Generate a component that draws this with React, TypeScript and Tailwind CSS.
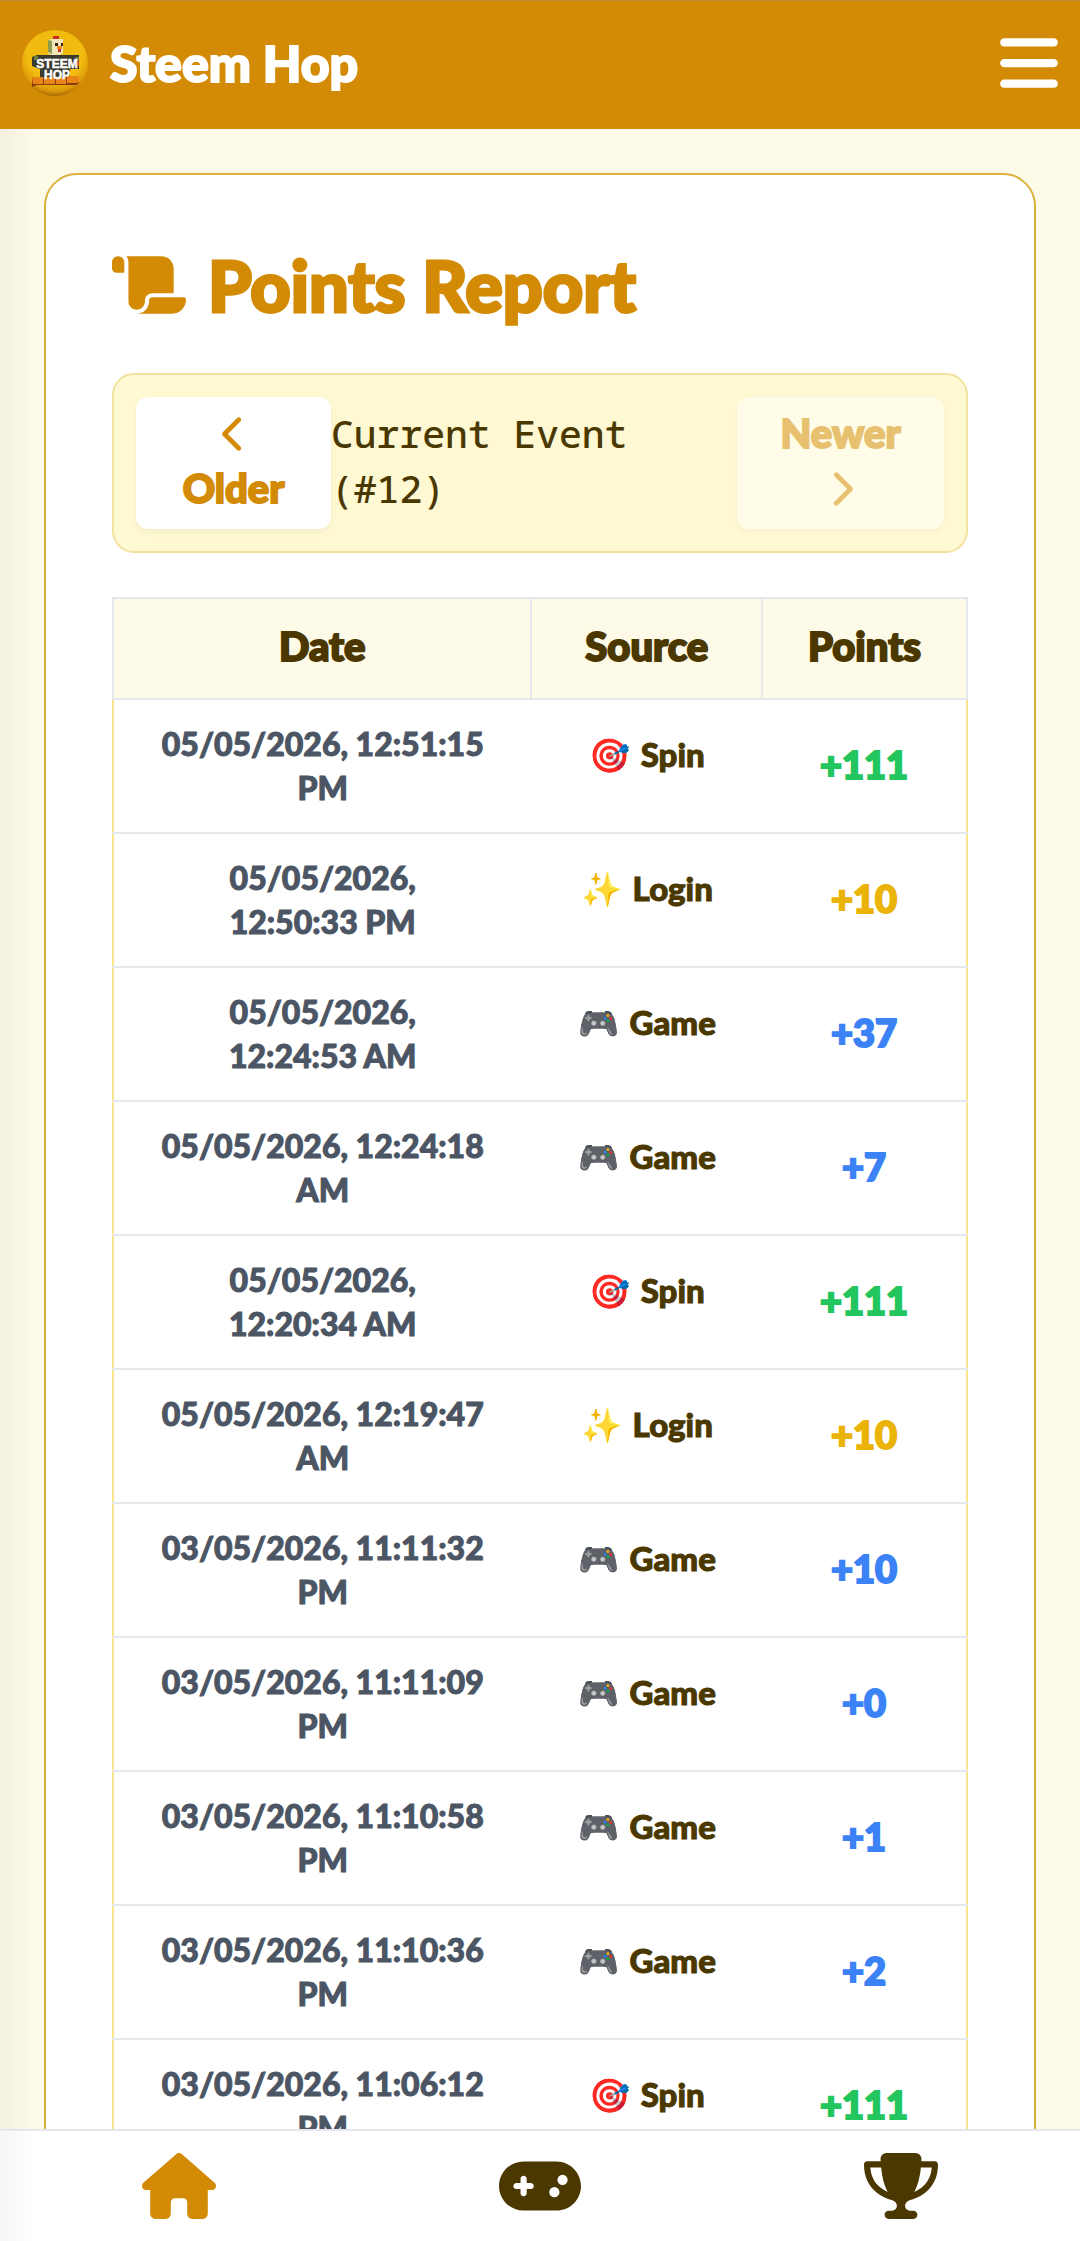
import clsx from "clsx";
import { useState } from "react";
import {
  FaBars,
  FaChevronLeft,
  FaChevronRight,
  FaGamepad,
  FaHouse,
  FaScroll,
  FaTrophy,
} from "react-icons/fa6";

type Source = "Spin" | "Login" | "Game";

interface PointEntry {
  date: [string, string];
  source: Source;
  points: number;
}

const sourceIcons: Record<Source, string> = {
  Spin: "🎯",
  Login: "✨",
  Game: "🎮",
};

const pointColors: Record<Source, string> = {
  Spin: "text-[#22c55e]",
  Login: "text-[#eab308]",
  Game: "text-[#3b82f6]",
};

const entries: PointEntry[] = [
  { date: ["05/05/2026, 12:51:15", "PM"], source: "Spin", points: 111 },
  { date: ["05/05/2026,", "12:50:33 PM"], source: "Login", points: 10 },
  { date: ["05/05/2026,", "12:24:53 AM"], source: "Game", points: 37 },
  { date: ["05/05/2026, 12:24:18", "AM"], source: "Game", points: 7 },
  { date: ["05/05/2026,", "12:20:34 AM"], source: "Spin", points: 111 },
  { date: ["05/05/2026, 12:19:47", "AM"], source: "Login", points: 10 },
  { date: ["03/05/2026, 11:11:32", "PM"], source: "Game", points: 10 },
  { date: ["03/05/2026, 11:11:09", "PM"], source: "Game", points: 0 },
  { date: ["03/05/2026, 11:10:58", "PM"], source: "Game", points: 1 },
  { date: ["03/05/2026, 11:10:36", "PM"], source: "Game", points: 2 },
  { date: ["03/05/2026, 11:06:12", "PM"], source: "Spin", points: 111 },
];

const tabs = [
  { id: "home", label: "Home", icon: FaHouse, width: "w-[74px]" },
  { id: "games", label: "Games", icon: FaGamepad, width: "w-[82px]" },
  { id: "leaderboard", label: "Leaderboard", icon: FaTrophy, width: "w-[74px]" },
];

const Logo: React.FC = () => (
  <svg viewBox="0 0 66 66" className="size-[66px] shrink-0" aria-hidden="true">
    <defs>
      <radialGradient id="ball" cx="0.5" cy="0.35" r="0.65">
        <stop offset="0" stopColor="#efb80c" />
        <stop offset="0.65" stopColor="#f2bd10" />
        <stop offset="0.88" stopColor="#dd9a08" />
        <stop offset="1" stopColor="#a96b06" />
      </radialGradient>
    </defs>
    <circle cx="33" cy="33" r="33" fill="url(#ball)" />
    <path d="M31 6h6v5h-6z" fill="#c9301c" />
    <path d="M26 10l4-1h11v14l-3 2H29l-3-2z" fill="#f3e6bd" />
    <path d="M26 10l4 1v13l-4-2z" fill="#8d9c4d" />
    <path d="M33 13h3v3h-3zM39 13h2v3h-2z" fill="#33240f" />
    <path d="M35 16h5v3h-5z" fill="#ec8a12" />
    <path d="M36 19h3v3h-3z" fill="#c9301c" />
    <path d="M10 27l5-2h42v14h-9v10H18V39l-8-3z" fill="#3c3b30" />
    <path d="M12 26h4v4h-4zM54 27h3v4h-3z" fill="#6e7b42" />
    <path d="M55 32h2v4h-2z" fill="#d8431f" />
    <path d="M10 47h47v6l-3 2H15l-5 2z" fill="#8a3d0b" />
    <path d="M10 47h11v7H11zM22 47h11v7H22zM34 47h10v7H34zM45 46h12v6l-2 1H45z" fill="#e98518" />
    <g
      fill="#fff"
      stroke="#fff"
      strokeWidth="0.5"
      fontFamily="'Liberation Sans', sans-serif"
      fontWeight="700"
      textAnchor="middle"
    >
      <text x="35" y="38" fontSize="12">
        STEEM
      </text>
      <text x="35" y="49" fontSize="12">
        HOP
      </text>
    </g>
  </svg>
);

const Header: React.FC = () => (
  <header className="flex shrink-0 items-center justify-between border-t border-[#b98a35] bg-[#d38a04] px-[22px] pt-[29px] pb-[33px] text-white">
    <a href="#home" className="flex items-center gap-[22px]">
      <Logo />
      <span className="text-[50px] leading-[66px] font-black [-webkit-text-stroke:2px]">
        Steem Hop
      </span>
    </a>
    <button type="button" aria-label="Open menu">
      <FaBars className="h-[66px] w-[58px]" />
    </button>
  </header>
);

const EventPager: React.FC = () => (
  <div className="mt-[44px] flex items-center justify-between rounded-[22px] border-2 border-[#f1e29f] bg-[#fef8d3] p-[22px] text-[38px] leading-[55px]">
    <button
      type="button"
      className="flex w-[195px] shrink-0 flex-col items-center rounded-xl bg-white pt-[9px] pb-[13px] text-[40px] font-black text-[#d38a04] shadow-[0_3px_6px_rgba(0,0,0,0.05)] [-webkit-text-stroke:2px]"
    >
      <span className="flex h-[55px] items-center">
        <FaChevronLeft className="size-[38px] stroke-none" />
      </span>
      Older
    </button>
    <span className="grow pb-1 font-['Noto_Sans_Mono','DejaVu_Sans_Mono',monospace] font-medium">
      Current Event
      <br />
      (#12)
    </span>
    <button
      type="button"
      disabled
      className="flex w-[207px] shrink-0 flex-col items-center rounded-xl bg-[#fffce8] pt-[9px] pb-[13px] text-[40px] font-black text-[#e7c170] shadow-[0_3px_6px_rgba(0,0,0,0.03)] [-webkit-text-stroke:2px]"
    >
      Newer
      <span className="flex h-[55px] items-center">
        <FaChevronRight className="size-[38px] stroke-none" />
      </span>
    </button>
  </div>
);

const PointsTable: React.FC = () => (
  <table className="mt-[44px] w-full table-fixed border-collapse border-2 border-[#f6e58d] text-center">
    <colgroup>
      <col className="w-[49%]" />
      <col className="w-[27%]" />
      <col className="w-[24%]" />
    </colgroup>
    <thead className="bg-[#fefae8] text-[40px] leading-[55px] [-webkit-text-stroke:2px]">
      <tr>
        {["Date", "Source", "Points"].map((title) => (
          <th key={title} className="border-2 border-gray-200 pt-5 pb-6 font-black">
            {title}
          </th>
        ))}
      </tr>
    </thead>
    <tbody>
      {entries.map(({ date, source, points }) => (
        <tr key={date.join(" ")} className="border-b-2 border-b-gray-200">
          <td className="py-[22px] text-[32px] leading-[44px] font-black text-[#4b5563] [-webkit-text-stroke:1px]">
            <span className="block">{date[0]}</span>
            <span className="block">{date[1]}</span>
          </td>
          <td className="py-8 align-top text-[33px] leading-[44px] font-black [-webkit-text-stroke:1px]">
            <span className="flex items-center justify-center gap-[11px]">
              <span>{sourceIcons[source]}</span>
              {source}
            </span>
          </td>
          <td
            className={clsx(
              "pb-1 text-[38px] leading-[55px] font-black [-webkit-text-stroke:2px]",
              pointColors[source]
            )}
          >
            +{points}
          </td>
        </tr>
      ))}
    </tbody>
  </table>
);

const TabBar: React.FC = () => {
  const [active, setActive] = useState("home");
  return (
    <nav className="flex shrink-0 justify-around border-t-2 border-gray-200 bg-linear-to-r from-[#f6f6f6] to-white to-[36px] py-[22px]">
      {tabs.map(({ id, label, icon: Icon, width }) => (
        <button
          key={id}
          type="button"
          aria-label={label}
          onClick={() => setActive(id)}
          className={clsx(active === id && "text-[#d38a04]")}
        >
          <Icon className={clsx("h-[66px]", width)} />
        </button>
      ))}
    </nav>
  );
};

export default function App() {
  return (
    <div className="flex h-screen flex-col bg-[#fefae8] font-[Lato,sans-serif] text-[#4a3800]">
      <Header />
      <main className="grow overflow-y-auto bg-linear-to-r from-[#f4f0df] to-[#fefae8] to-[36px] p-[44px] [scrollbar-width:none]">
        <section className="rounded-[33px] border-2 border-[#dcb03c] bg-white p-[66px]">
          <h1 className="flex items-center gap-[22px] text-[70px] leading-[88px] font-black text-[#d38a04] [-webkit-text-stroke:3px]">
            <FaScroll className="h-[66px] w-[74px] shrink-0 stroke-none" />
            Points Report
          </h1>
          <EventPager />
          <PointsTable />
        </section>
      </main>
      <TabBar />
    </div>
  );
}
